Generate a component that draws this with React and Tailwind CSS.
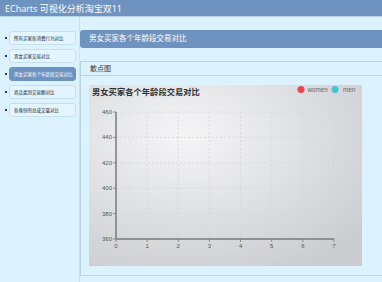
import React from "react";

const menu = [
  "所有买家各消费行为对比",
  "男女买家交易对比",
  "男女买家各个年龄段交易对比",
  "商品类别交易额对比",
  "各省份的总成交量对比",
];

const xs = [0, 1, 2, 3, 4, 5, 6, 7];
const ys = [460, 440, 420, 400, 380, 360];

const Chart = () => {
  const ox = 27;
  const top = 27;
  const bottom = 154;
  const right = 245;
  const dx = (right - ox) / 7;
  const dy = (bottom - top) / 5;
  return (
    <svg width="273" height="181" viewBox="0 0 273 181" className="block">
      <defs>
        <radialGradient id="bg" cx="35%" cy="28%" r="85%">
          <stop offset="0%" stopColor="#f5f5f6" />
          <stop offset="100%" stopColor="#cbccd0" />
        </radialGradient>
      </defs>
      <rect width="273" height="181" fill="url(#bg)" />
      <text x="3" y="10" fontSize="8.3" fontWeight="700" fill="#333" fontFamily="'Noto Sans CJK SC', sans-serif">
        男女买家各个年龄段交易对比
      </text>
      <circle cx="212" cy="4.5" r="3.5" fill="#e8474f" />
      <text x="218.5" y="7" fontSize="6.3" fill="#666" fontFamily="'Liberation Sans', sans-serif">women</text>
      <circle cx="246" cy="4.5" r="3.5" fill="#3fc6d6" />
      <text x="254" y="7" fontSize="6.3" fill="#666" fontFamily="'Liberation Sans', sans-serif">men</text>
      {xs.slice(1).map((v) => (
        <line key={"vx" + v} x1={ox + v * dx} y1={top} x2={ox + v * dx} y2={bottom} stroke="#d6d6d8" strokeWidth="0.8" strokeDasharray="2 2" />
      ))}
      {ys.slice(0, 5).map((v, i) => (
        <line key={"hy" + v} x1={ox} y1={top + i * dy} x2={right} y2={top + i * dy} stroke="#d6d6d8" strokeWidth="0.8" strokeDasharray="2 2" />
      ))}
      <line x1={ox} y1={top} x2={ox} y2={bottom} stroke="#7a7a7c" strokeWidth="1.5" />
      <line x1={ox} y1={bottom} x2={right} y2={bottom} stroke="#7a7a7c" strokeWidth="1.5" />
      {ys.map((v, i) => (
        <g key={"y" + v}>
          <line x1={ox - 3} y1={top + i * dy} x2={ox} y2={top + i * dy} stroke="#7a7a7c" strokeWidth="0.8" />
          <text x={ox - 4} y={top + i * dy + 2} fontSize="6" textAnchor="end" fill="#555" fontFamily="'Liberation Sans', sans-serif">
            {v}
          </text>
        </g>
      ))}
      {xs.map((v) => (
        <g key={"x" + v}>
          <line x1={ox + v * dx} y1={bottom} x2={ox + v * dx} y2={bottom + 3} stroke="#7a7a7c" strokeWidth="0.8" />
          <text x={ox + v * dx} y={bottom + 9} fontSize="6" textAnchor="middle" fill="#555" fontFamily="'Liberation Sans', sans-serif">
            {v}
          </text>
        </g>
      ))}
    </svg>
  );
};

export default function App() {
  return (
    <div className="w-[382px] h-[282px] overflow-hidden bg-[#dcf2fe] font-['Open_Sans','Noto_Sans_CJK_SC',sans-serif]">
      {/* Header */}
      <div className="h-[17px] bg-[#6f93c0] border-b border-[#b9d3e6] flex items-center pl-[5px]">
        <span className="text-white text-[9px] leading-none">ECharts 可视化分析淘宝双11</span>
      </div>

      <div className="flex h-[265px]">
        {/* Sidebar */}
        <div className="w-[80px] shrink-0 border-r border-[#c9e2f0] pt-[14px] flex flex-col gap-[4px]">
          {menu.map((item, i) => (
            <div key={item} className="flex items-center">
              <span className="w-[2px] h-[2px] bg-[#2a3b55] ml-[5px] mr-[2px]"></span>
              <div
                className={`w-[67px] h-[14px] rounded-[3px] border flex items-center pl-[4px] text-[4.5px] leading-none whitespace-nowrap ${
                  i === 2
                    ? "bg-[#6f93c0] border-[#6f93c0] text-white"
                    : "bg-[#e3f5ff] border-[#c6dfee] text-[#222]"
                }`}
              >
                {item}
              </div>
            </div>
          ))}
        </div>

        {/* Main */}
        <div className="flex-1 pt-[13px]">
          <div className="h-[18px] bg-[#6f93c0] rounded-l-[3px] flex items-center pl-[9px]">
            <span className="text-white text-[7.5px] leading-none">男女买家各个年龄段交易对比</span>
          </div>
          <div className="mt-[13px] h-[215px] border-t border-l border-b border-[#b9d3e6]">
            <div className="h-[14px] border-b border-[#b9d3e6] flex items-center pl-[9px]">
              <span className="text-[#333] text-[7px] leading-none">散点图</span>
            </div>
            <div className="pl-[8px] pt-[9px]">
              <Chart />
            </div>
          </div>
        </div>
      </div>
    </div>
  );
}
